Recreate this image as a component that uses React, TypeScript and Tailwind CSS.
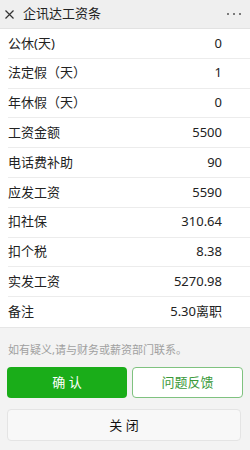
import React from "react";

const rows: [string, string][] = [
  ["公休(天)", "0"],
  ["法定假（天）", "1"],
  ["年休假（天）", "0"],
  ["工资金额", "5500"],
  ["电话费补助", "90"],
  ["应发工资", "5590"],
  ["扣社保", "310.64"],
  ["扣个税", "8.38"],
  ["实发工资", "5270.98"],
  ["备注", "5.30离职"],
];

export default function App() {
  return (
    <div
      className="w-[250px] h-[450px] bg-[#f3f3f3] overflow-hidden text-[#222]"
      style={{ fontFamily: '"Noto Sans", "Noto Sans CJK SC", sans-serif' }}
    >
      <div className="h-[29px] bg-[#efefef] flex items-center pl-[5px] pr-[9px] border-b border-[#e2e2e2]">
        <svg width="9" height="9" viewBox="0 0 9 9" className="mr-[9px]">
          <path d="M0.5 0.5 L8.5 8.5 M8.5 0.5 L0.5 8.5" stroke="#333" strokeWidth="1.2" />
        </svg>
        <span className="text-[13px] text-[#222]">企讯达工资条</span>
        <span className="ml-auto flex gap-[4px]">
          <span className="w-[2px] h-[2px] rounded-full bg-[#555]" />
          <span className="w-[2px] h-[2px] rounded-full bg-[#555]" />
          <span className="w-[2px] h-[2px] rounded-full bg-[#555]" />
        </span>
      </div>
      <div className="bg-white pl-[8px]">
        {rows.map(([k, v], i) => (
          <div
            key={k}
            className={
              "h-[29.8px] flex items-center justify-between pr-[28px] text-[13px] " +
              (i < rows.length - 1 ? "border-b border-[#ececec]" : "")
            }
          >
            <span>{k}</span>
            <span>{v}</span>
          </div>
        ))}
      </div>
      <div className="border-t border-[#e6e6e6] px-[8px] pt-[14px] text-[11px] text-[#a0a0a0]">
        如有疑义,请与财务或薪资部门联系。
      </div>
      <div className="flex gap-[5px] px-[7px] mt-[9px]">
        <button className="w-[120px] h-[31px] rounded-[4px] bg-[#1aad19] text-white text-[13px]">
          确 认
        </button>
        <button className="flex-1 h-[31px] rounded-[4px] border border-[#7fc27f] bg-white text-[#3a9a3a] text-[13px]">
          问题反馈
        </button>
      </div>
      <div className="px-[7px] mt-[11px]">
        <button className="w-[234px] h-[32px] rounded-[4px] border border-[#e4e4e4] bg-[#f8f8f8] text-[13px] text-[#111]">
          关 闭
        </button>
      </div>
    </div>
  );
}
